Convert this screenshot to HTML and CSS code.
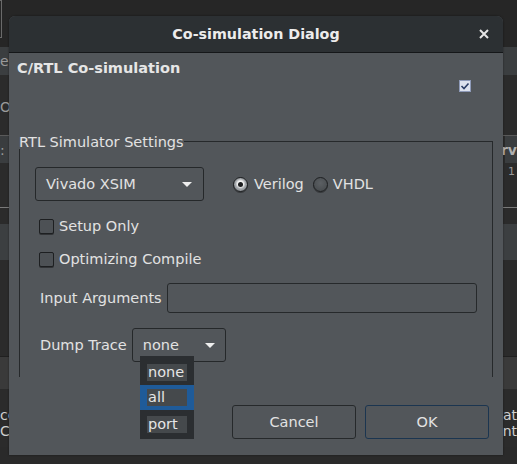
FILE: index.html
```html
<!DOCTYPE html>
<html>
<head>
<meta charset="utf-8">
<link rel="stylesheet" href="styles.css">
</head>
<body>
<div class="app">
  <div class="strip s-top"><span class="edge-box"></span></div>
  <div class="strip s-gray1"><span class="lt">e</span><span class="rt"></span></div>
  <div class="strip s-dark1"><span class="lt o">O</span></div>
  <div class="strip s-gray2"><span class="lt">:</span><span class="rt bold">rv</span></div>
  <div class="strip s-dark2"><span class="rt one">1</span></div>
  <div class="strip s-line"></div>
  <div class="strip s-dark3"></div>
  <div class="strip s-gray3"></div>
  <div class="strip s-dark4"></div>
  <div class="strip s-gray4"></div>
  <div class="strip s-dark5"><span class="lt">ce</span><span class="rt">cat</span></div>
  <div class="strip s-dark6"><span class="lt">CF</span><span class="rt">ent</span></div>
</div>

<div class="dialog">
  <div class="titlebar">
    <span class="title">Co-simulation Dialog</span>
    <svg class="close" width="10" height="10" viewBox="0 0 10 10"><path d="M1 1 L9 9 M9 1 L1 9" stroke="#e6e6e6" stroke-width="2" fill="none"/></svg>
  </div>
  <div class="dlg-body">
    <div class="head-title">C/RTL Co-simulation</div>
    <div class="head-check">
      <span class="tick-box"><svg width="10" height="10" viewBox="0 0 10 10"><path d="M1.5 5 L4 7.5 L8.5 2.5" stroke="#2c3e66" stroke-width="1.6" fill="none"/></svg></span>
    </div>

    <div class="group">
      <div class="group-head"><span class="group-label">RTL Simulator Settings</span><span class="group-rule"></span></div>
      <div class="group-body">
        <div class="row row-sim">
          <div class="combo combo-sim"><span>Vivado XSIM</span><span class="arrow"></span></div>
          <label class="radio"><span class="rad on"><span class="dot"></span></span>Verilog</label>
          <label class="radio r2"><span class="rad"></span>VHDL</label>
        </div>
        <div class="row row-chk c1"><span class="chk"></span>Setup Only</div>
        <div class="row row-chk c2"><span class="chk"></span>Optimizing Compile</div>
        <div class="row row-input"><span class="lbl">Input Arguments</span><span class="input"></span></div>
        <div class="row row-dump"><span class="lbl">Dump Trace</span><div class="combo combo-dump"><span>none</span><span class="arrow"></span></div></div>
      </div>
    </div>

    <div class="buttons">
      <div class="btn">Cancel</div>
      <div class="btn ok">OK</div>
    </div>
  </div>
</div>

<div class="popup">
  <div class="item"><span>none</span></div>
  <div class="item sel"><span>all</span></div>
  <div class="item"><span>port</span></div>
</div>
</body>
</html>
```

FILE: styles.css
```css
html, body {
  margin: 0;
  padding: 0;
}
body {
  width: 517px;
  height: 464px;
  overflow: hidden;
  position: relative;
  background: #2a2a2a;
  font-family: "DejaVu Sans", sans-serif;
  font-size: 14.5px;
  color: #e2e2e2;
}

/* background application */
.app {
  display: flex;
  flex-direction: column;
  width: 517px;
}
.strip {
  display: flex;
  justify-content: space-between;
  align-items: center;
  color: #9a9a9a;
  font-size: 14px;
  overflow: hidden;
}
.lt { margin-left: 0; }
.rt { margin-right: 0; }
.bold { font-weight: bold; color: #b0b0b0; }
.s-top { height: 47px; background: #262626; align-items: flex-start; }
.edge-box { width: 2px; height: 36px; border: 1px solid #6a6a6a; border-left: none; margin-left: -1px; }
.s-gray1 { height: 28px; background: #3b3e40; }
.s-gray1 .rt { width: 20px; height: 28px; background: #3b3e40; }
.s-dark1 { height: 60px; background: #2b2b2b; }
.s-dark1 .o { margin-top: 4px; }
.s-gray2 { height: 27px; border-top: 1px solid #5a5a5a; background: linear-gradient(to right, #3a3d3f 0 10px, #2b2b2b 10px 505px, #3a3d3f 505px); }
.s-dark2 { height: 44px; background: #2b2b2b; justify-content: flex-end; align-items: flex-start; }
.one { font-size: 11px; margin-top: 2px; margin-right: 2px; }
.s-line { height: 1px; background: #7a7a7a; }
.s-dark3 { height: 16px; background: #2b2b2b; }
.s-gray3 { height: 36px; background: #3c3f41; }
.s-dark4 { height: 96px; background: #2b2b2b; border-bottom: 1px solid #202020; }
.s-gray4 { height: 32px; background: #3a3a3a; }
.s-dark5 { height: 34px; background: #2b2b2b; align-items: flex-end; color: #cfcfcf; }
.s-dark6 { height: 24px; background: #2b2b2b; align-items: flex-start; color: #cfcfcf; }

/* dialog */
.dialog {
  position: absolute;
  left: 9px;
  top: 16px;
  width: 494px;
  height: 439px;
  background: #52565a;
  border-radius: 6px 6px 0 0;
  overflow: hidden;
  display: flex;
  flex-direction: column;
  box-shadow: 0 0 2px rgba(0,0,0,0.5);
}
.titlebar {
  height: 36px;
  flex: none;
  background: #2c3033;
  border-bottom: 1px solid #151719;
  display: flex;
  align-items: center;
  justify-content: center;
  position: relative;
}
.title {
  font-weight: bold;
  font-size: 14.3px;
  color: #ececec;
  margin-top: 0;
}
.close {
  position: absolute;
  right: 14px;
  top: 13px;
}
.dlg-body {
  flex: 1;
  display: flex;
  flex-direction: column;
}
.head-title {
  font-weight: bold;
  margin: 7px 0 0 8px;
  line-height: 17px;
  color: #e6e6e6;
}
.head-check {
  display: flex;
  justify-content: flex-end;
  margin-top: 3px;
  padding-right: 32px;
}
.tick-box {
  width: 10px;
  height: 10px;
  border: 1px solid #8e9ab8;
  background: #dde2ee;
  display: flex;
  align-items: center;
  justify-content: center;
}

/* group box */
.group {
  margin: 42px 10px 0 10px;
  display: flex;
  flex-direction: column;
}
.group-head {
  display: flex;
  height: 15px;
}
.group-label {
  line-height: 17px;
  margin-top: 0;
  white-space: nowrap;
  color: #e2e2e2;
}
.group-rule {
  flex: 1;
  margin-top: 7px;
  border-top: 1px solid #26292b;
  border-right: 1px solid #26292b;
}
.group-body {
  height: 228px;
  border-left: 1px solid #26292b;
  border-right: 1px solid #26292b;
  padding-left: 15px;
  display: flex;
  flex-direction: column;
}
.row {
  display: flex;
  align-items: center;
}
.row-sim { margin-top: 18px; }
.combo {
  box-sizing: border-box;
  border: 1px solid #25282a;
  border-radius: 3px;
  display: flex;
  align-items: center;
  justify-content: space-between;
  padding: 0 11px 0 10px;
}
.combo-sim { width: 169px; height: 34px; }
.arrow {
  width: 0;
  height: 0;
  border-left: 5px solid transparent;
  border-right: 5px solid transparent;
  border-top: 5px solid #eeeeee;
  margin-top: 1px;
}
.radio {
  display: flex;
  align-items: center;
  margin-left: 29px;
}
.radio.r2 { margin-left: 9px; }
.rad {
  box-sizing: border-box;
  width: 15px;
  height: 15px;
  border-radius: 50%;
  border: 1px solid #1d1f21;
  background: radial-gradient(circle at 50% 40%, #5c6064, #43474a);
  margin-right: 5px;
  display: flex;
  align-items: center;
  justify-content: center;
  box-shadow: 0 1px 0 rgba(0,0,0,0.35);
}
.rad.on {
  background: radial-gradient(circle at 50% 45%, #f2f2f2 0 3px, #a4a8ac 5px, #6a6e72);
  margin-right: 6px;
}
.dot {
  width: 5px;
  height: 5px;
  border-radius: 50%;
  background: #1a1c1e;
}
.row-chk {
  margin-left: 4px;
  line-height: 17px;
}
.c1 { margin-top: 17px; }
.c2 { margin-top: 16px; }
.chk {
  box-sizing: border-box;
  width: 15px;
  height: 15px;
  border: 1px solid #1d1f21;
  border-radius: 2px;
  background: #4d5155;
  margin-right: 5px;
  box-shadow: 0 1px 0 rgba(0,0,0,0.4);
}
.lbl { margin-left: 5px; }
.row-input { margin-top: 15px; }
.input {
  box-sizing: border-box;
  width: 310px;
  height: 30px;
  border: 1px solid #26292b;
  border-radius: 3px;
  margin-left: 5px;
}
.row-dump { margin-top: 15px; }
.combo-dump {
  width: 94px;
  height: 34px;
  margin-left: 5px;
  padding-left: 10px;
  padding-right: 10px;
}

/* buttons */
.buttons {
  display: flex;
  justify-content: flex-end;
  gap: 9px;
  margin-top: 28px;
  padding-right: 14px;
}
.btn {
  box-sizing: border-box;
  width: 124px;
  height: 34px;
  border: 1px solid #26292b;
  border-radius: 3px;
  display: flex;
  align-items: center;
  justify-content: center;
  color: #e2e2e2;
}
.btn.ok { border-color: #1b3550; }

/* dropdown popup */
.popup {
  position: absolute;
  left: 140px;
  top: 356px;
  width: 54px;
  height: 83px;
  box-sizing: border-box;
  background: #2b2e31;
  padding-top: 3px;
  display: flex;
  flex-direction: column;
  font-size: 14.5px;
}
.item {
  height: 26px;
  display: flex;
  align-items: center;
  padding-left: 7px;
  box-sizing: border-box;
}
.item span {
  width: 40px;
  height: 17px;
  line-height: 17px;
  background: #45494c;
  padding-left: 1px;
  box-sizing: border-box;
  color: #e6e6e6;
}
.item.sel {
  height: 25px;
  margin-bottom: 1px;
  background: #1f5b99;
}
```
